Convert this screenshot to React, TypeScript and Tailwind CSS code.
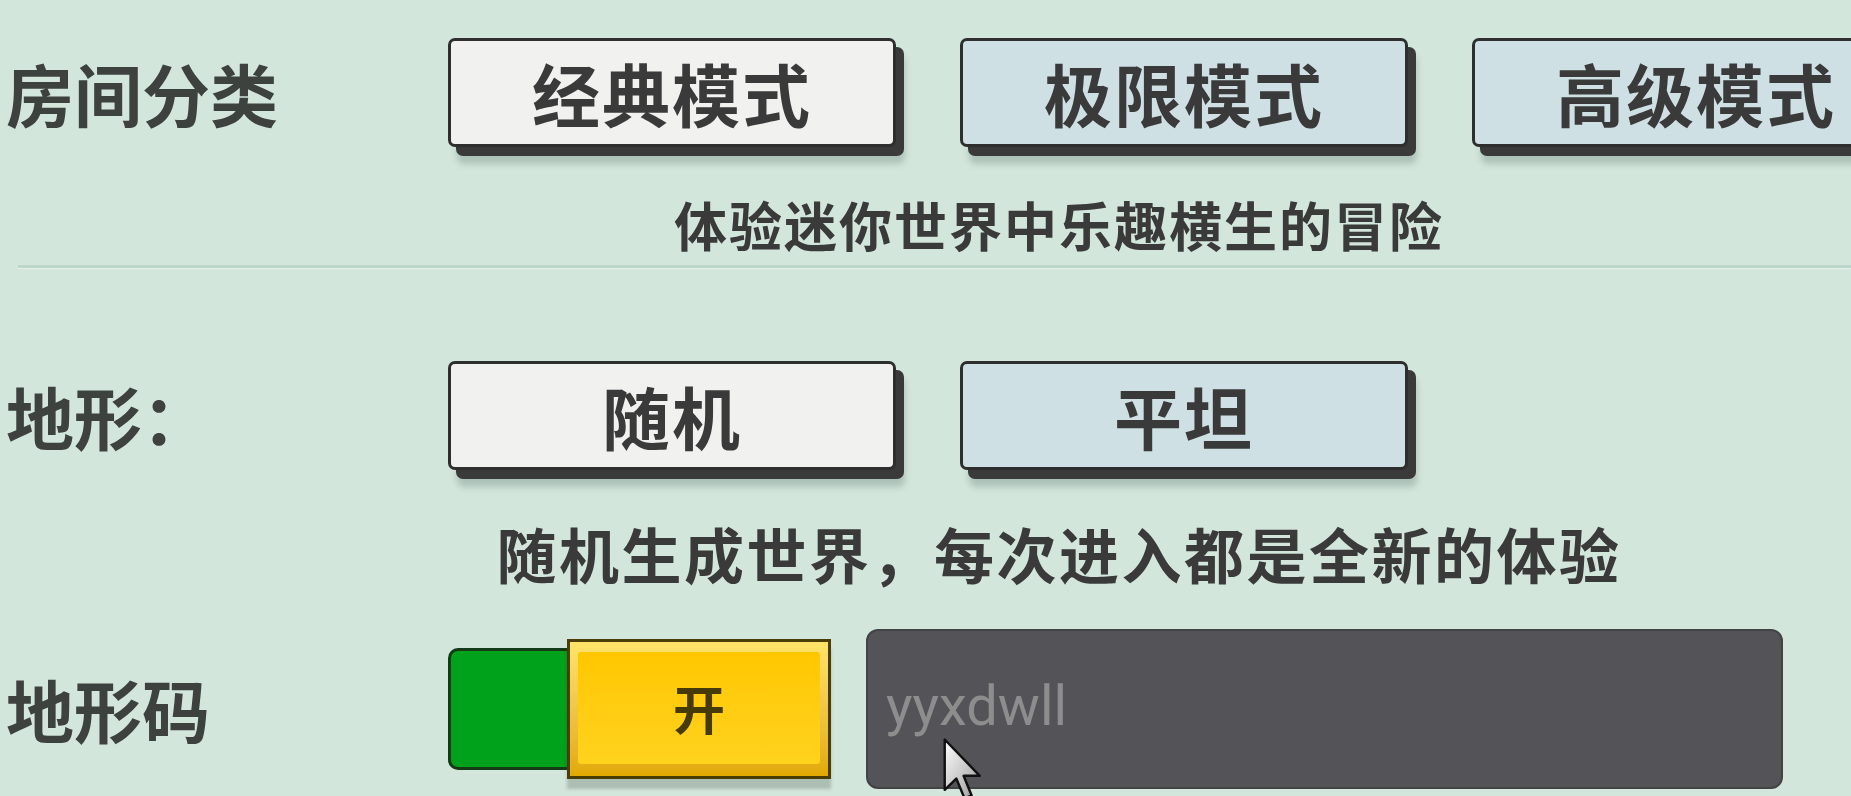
import React from 'react';

const cjk = "font-['Noto_Sans_CJK_SC','Noto_Sans',sans-serif]";

function ModeButton({ label, active }: { label: string; active?: boolean }) {
  return (
    <div
      className={`w-[448px] h-[109px] shrink-0 rounded-[7px] border-[3px] border-[#2e2e2e] flex items-center justify-center shadow-[8px_9px_0_#3a3a3a,9px_17px_6px_rgba(40,70,55,0.22)] ${
        active ? 'bg-[#f1f1f0]' : 'bg-[#cfe0e4]'
      }`}
    >
      <span className={`${cjk} text-[68px] leading-none font-bold tracking-[2px] text-[#3a3a3a]`}>{label}</span>
    </div>
  );
}

function Label({ text }: { text: string }) {
  return (
    <div className={`${cjk} w-[442px] shrink-0 text-[68px] leading-none font-bold text-[#3e423f]`}>{text}</div>
  );
}

export default function App() {
  return (
    <div className="relative w-full h-[796px] overflow-hidden bg-[#d3e6dc]">
      {/* 房间分类 */}
      <div className="flex items-center pl-[6px] pt-[38px]">
        <Label text="房间分类" />
        <div className="flex gap-[64px]">
          <ModeButton label="经典模式" active />
          <ModeButton label="极限模式" />
          <ModeButton label="高级模式" />
        </div>
      </div>
      <p className={`${cjk} ml-[448px] w-[1222px] mt-[51px] text-center text-[53px] leading-none font-bold tracking-[2px] text-[#3a3a3a]`}>
        体验迷你世界中乐趣横生的冒险
      </p>

      {/* 分割线 */}
      <div className="ml-[18px] mt-[14px] h-[3px] bg-[#bcd6c9] shadow-[0_1px_1px_rgba(255,255,255,0.4)]" />

      {/* 地形 */}
      <div className="flex items-center pl-[6px] mt-[93px]">
        <Label text="地形：" />
        <div className="flex gap-[64px]">
          <ModeButton label="随机" active />
          <ModeButton label="平坦" />
        </div>
      </div>
      <p className={`${cjk} ml-[448px] w-[1222px] mt-[53px] text-center text-[60px] leading-none font-bold tracking-[2.5px] text-[#3a3a3a]`}>
        随机生成世界，每次进入都是全新的体验
      </p>

      {/* 地形码 */}
      <div className="flex items-center pl-[6px] mt-[46px]">
        <Label text="地形码" />
        <div className="flex items-center">
          <div className="w-[119px] h-[122px] rounded-l-[10px] border-[3px] border-r-0 border-[#153a16] bg-[#00a11b]" />
          <div className="w-[264px] h-[140px] border-[3px] border-[#4b3d06] bg-gradient-to-b from-[#ffe46a] to-[#e2a900] pt-[10px] pl-[8px] pr-[8px] pb-[12px] shadow-[0_10px_3px_rgba(60,70,60,0.25)]">
            <div className="w-full h-full rounded-[3px] bg-gradient-to-b from-[#ffc700] to-[#ffd21c] flex items-center justify-center">
              <span className={`${cjk} text-[52px] leading-none font-bold text-[#463a08]`}>开</span>
            </div>
          </div>
          <div className="ml-[35px] w-[917px] h-[160px] rounded-[12px] bg-[#545357] border-2 border-[#434245] flex items-center pl-[18px]">
            <span className="font-['Roboto',sans-serif] text-[56px] leading-none text-[#8d8d8d] pb-[6px]">yyxdwll</span>
          </div>
        </div>
      </div>

      {/* 鼠标指针 */}
      <svg
        className="absolute left-[943px] top-[738px]"
        width="40"
        height="64"
        viewBox="0 0 13 21"
      >
        <defs>
          <linearGradient id="cur" x1="0" y1="0" x2="1" y2="1">
            <stop offset="0" stopColor="#ffffff" />
            <stop offset="1" stopColor="#9a9a9a" />
          </linearGradient>
        </defs>
        <path
          d="M0.5 0.5 L0.5 17 L4.3 13.3 L7 19.8 L9.3 18.8 L6.7 12.4 L12 12.4 Z"
          fill="url(#cur)"
          stroke="#111"
          strokeWidth="0.8"
          strokeLinejoin="round"
        />
      </svg>
    </div>
  );
}
